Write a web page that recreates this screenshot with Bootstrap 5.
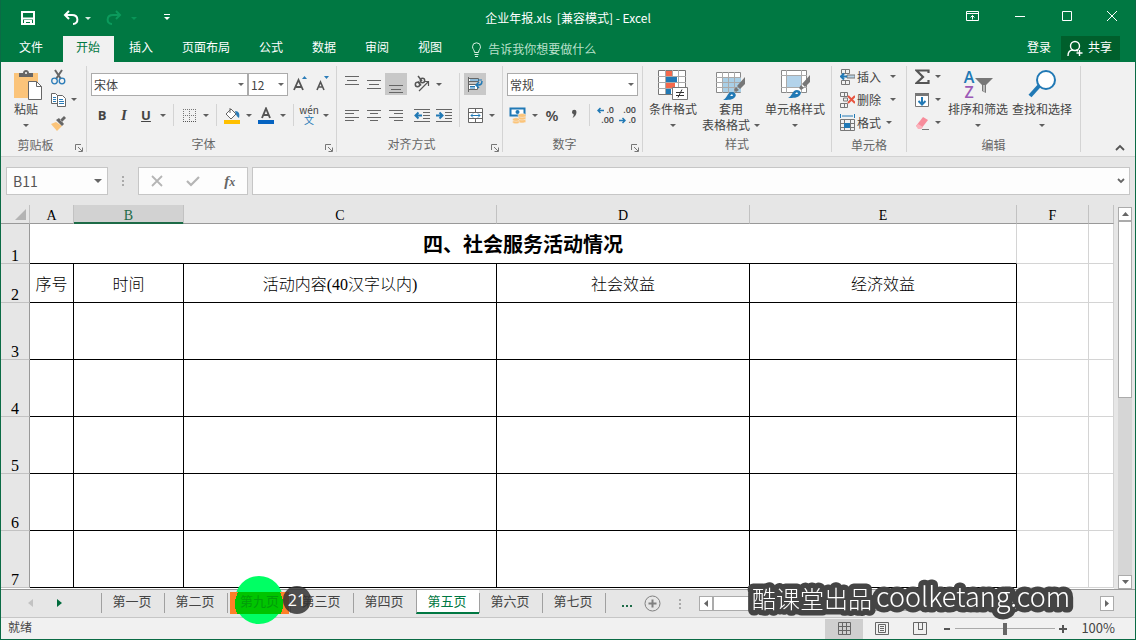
<!DOCTYPE html>
<html lang="zh-CN">
<head>
<meta charset="utf-8">
<meta name="viewport" content="width=device-width, initial-scale=1">
<title>企业年报.xls [兼容模式] - Excel</title>
<link href="https://cdn.jsdelivr.net/npm/bootstrap@5.3.0/dist/css/bootstrap.min.css" rel="stylesheet">
<style>
:root{--xl:#007842;--ribbon:#f1f1f1;--chrome:#e6e6e6;--ink:#444}
body{font-family:"Noto Sans CJK SC","Open Sans",sans-serif;font-size:12px;line-height:16px;color:var(--ink);background:var(--chrome)}
button{border:0;background:transparent;color:inherit;padding:0;font:inherit}
svg{display:block;flex:none}
.window{height:100vh;border:1px solid #0b6b45;border-top:0;overflow:hidden}
.bar-title{display:grid;grid-template-columns:1fr auto 1fr;height:36px;background:var(--xl);color:#fff}
.bar-title .quick{padding-left:19px}
.bar-title .sys{gap:25px;padding:0 12px 4px 0}
.drop{width:12px;display:flex;align-items:center;justify-content:center;flex:none}
.drop::after,.tri{content:"";border:4px solid transparent;border-bottom:0;border-top-color:currentColor;width:0;height:0;opacity:.85}
.quick .drop::after{border-width:3px;border-bottom:0}
.faded{color:#0b9a5c}
.bar-tabs{height:26px;background:var(--xl);color:#fff;padding-left:5px;gap:3px}
.bar-tabs a{color:#fff;text-decoration:none;padding:0 13px;height:26px;line-height:22px}
.bar-tabs a.current{background:var(--ribbon);color:var(--xl);margin-right:-1px;padding-right:14px}
.bar-tabs .tell{color:#b9e0cb;gap:6px;margin-left:13px}
.share{background:#005f2c;height:24px;padding:0 8px 0 6px;gap:5px;margin:0 15px 2px 7px}
.share span{line-height:14px;padding-bottom:2px}
.ribbon{background:var(--ribbon);padding:4px 0;border-bottom:1px solid #d2d2d2;height:95px}
.group{height:86px;border-right:1px solid #d4d4d4;position:relative;flex:none}
.group-name{height:18px;text-align:center;color:#666;margin-top:auto;line-height:20px}
.launch{position:absolute;right:3px;bottom:0}
.two-rows{padding:7px 0 0 4px;display:flex;flex-direction:column;gap:9px}
.g-clip{width:86px}.g-font{width:250px}.g-align{width:166px}.g-num{width:140px}.g-style{width:189px}.g-cell{width:75px}.g-edit{width:174px}
.styles-row{padding:0 6px}
.tool{width:22px;height:22px;display:flex;align-items:center;justify-content:center;flex:none}
.tool.down{background:#c8c8c8}
.vbar{width:1px;height:22px;margin:0 4px;background:#d4d4d4;flex:none}
.vbar.tall{height:54px;margin-top:7px}
.pick{height:23px;border:1px solid #ababab;background:#fff url("data:image/svg+xml,%3Csvg xmlns='http://www.w3.org/2000/svg' width='8' height='4'%3E%3Cpath d='M1 0h6L4 3z' fill='%23666'/%3E%3C/svg%3E") no-repeat right 2px center;appearance:none;border-radius:0;padding:0 2px;color:var(--ink);font-size:12px;line-height:20px;margin-bottom:-1px}
.w-face{width:157px}.w-size{width:40px}.w-num{width:131px}
.big{display:flex;flex-direction:column;align-items:center;padding-top:4px;flex:none;line-height:18px}
.big .second{height:14px;display:flex;align-items:center;gap:4px}
.big .tri,.row-tool .tri{border-width:3px;border-bottom:0}
.rows3{display:flex;flex-direction:column}
.row-tool{height:23px;display:flex;align-items:center;gap:2px;margin-top:-1px;margin-bottom:1px}
.row-tool .drop::after,.two-rows .drop::after{border-width:3px;border-bottom:0}
.letter{font-family:"Open Sans",sans-serif;font-size:13px;font-weight:700}
.percent{font-size:15px;font-weight:600}
.slanted{font-family:"Liberation Serif",serif;font-style:italic;font-size:15px}
.pinyin{flex-direction:column;width:22px;font-size:10px;line-height:10px}
.pinyin span+span{color:#2b7cb8}
.decimals{flex-direction:column;font:600 9px/10px "Open Sans",sans-serif;align-items:stretch;color:#444}
.decimals span{display:flex;justify-content:flex-end;align-items:center;gap:2px;padding-right:2px}
.az{width:30px;height:30px;display:flex;align-items:center;font:600 16px/15px "Open Sans",sans-serif;color:#2179b5}
.az .zed{color:#9b59b6}
.az-letters{display:flex;flex-direction:column;width:12px}
.bar-formula{height:48px;padding:10px 5px 10px 5px}
.box{background:#fdfdfd;border:1px solid #c6c6c6;height:28px}
.name-box{width:102px;font:14px/24px "Noto Sans CJK SC",sans-serif;padding:0 6px 1px;border-radius:0;background:#fdfdfd url("data:image/svg+xml,%3Csvg xmlns='http://www.w3.org/2000/svg' width='8' height='4'%3E%3Cpath d='M0 0h8L4 4z' fill='%23666'/%3E%3C/svg%3E") no-repeat right 5px center;color:#555}
.fx-tools{width:110px}
.fx{font:italic 700 15px/16px "Liberation Serif",serif;color:#666}
.fx small{font-size:12px}
.formula{min-width:0;border:0;background:transparent}
.grip{width:30px;display:flex;flex-direction:column;align-items:center;gap:2px}
.grip i{width:2px;height:2px;background:#aaa}
.sheet-area{min-height:0;flex:1 1 0;overflow:hidden}
.sheet{table-layout:fixed;border-collapse:separate;border-spacing:0;width:100%;color:#000;font-family:"Liberation Serif","Noto Sans CJK SC",serif;font-size:16px;line-height:18px;background:#fff}
.sheet th,.sheet td{padding:3px 0 0;text-align:center;vertical-align:middle;border-right:1px solid #d4d4d4;border-bottom:1px solid #d4d4d4;font-weight:300}
.sheet thead th{height:19px;padding:4px 0 0;line-height:14px;background:var(--chrome);border-color:#c2c2c2;border-bottom-color:#999;vertical-align:bottom;font-size:14px;font-weight:400}
.sheet thead th.sel{background:#d2d2d2;color:#1d6b47;border-bottom-color:#1d6b47;box-shadow:inset 0 -1px #1d6b47}
.sheet tbody th{background:var(--chrome);border-right-color:#999;border-bottom-color:#c2c2c2;vertical-align:bottom;line-height:14px}
.sheet tbody td.k{border-color:#000}
.sheet .heading{font-size:20px;font-weight:700;border-bottom-color:#000}
.sheet .r1{height:40px}.sheet .r2{height:39px}.sheet .rn{height:57px}
.c-head{width:29px}.c-a{width:44px}.c-b{width:110px}.c-c{width:313px}.c-d{width:253px}.c-e{width:267px}.c-f{width:72px}
.corner-tri{border-left:11px solid transparent;border-bottom:11px solid #b4b4b4;width:0;margin:0 3px 3px auto}
.vscroll{width:21px;padding:2px 3px 0 4px}
.vscroll .track{background:#d6d6d6}
.vscroll .thumb{height:50%;background:#fff;border:1px solid #ababab}
.sq{width:14px;height:14px;background:#fff;border:1px solid #ababab;display:flex;align-items:center;justify-content:center;flex:none}
.bar-sheets{height:29px;border-top:1px solid #999;border-bottom:1px solid #c6c6c6;position:relative;z-index:2;background:var(--chrome)}
.arrows{width:100px;padding:0 39px 2px 27px}
.sheet-tab{width:63px;height:20px;margin-top:3px;padding-right:2px;border-left:1px solid #a0a0a0;text-align:center;font-size:13px;line-height:16px;color:var(--ink);text-decoration:none;flex:none;position:relative}
.sheet-tab.current{background:#fff;color:var(--xl);height:24px;margin-top:0;padding-top:3px;border-bottom:2px solid var(--xl)}
.sheet-tab.last{border-right:1px solid #a0a0a0;width:64px}
.sheet-tab.nine{z-index:1;padding-right:0}
.sheet-tab.nine::before{content:"";position:absolute;width:48px;height:48px;border-radius:50%;background:#00ff64;left:7px;top:-17px;z-index:-1}
.nine span{display:block;margin:-1px 1px 0 2px;height:22px;line-height:18px;color:#009c0a;background:radial-gradient(circle at 29px 12px,#00c400 24px,#ff7f27 24px)}
.clicks{position:absolute;left:55px;top:-7px;width:28px;height:28px;border-radius:50%;background:rgba(50,50,50,.85);color:#fff;font:16px/28px "Open Sans",sans-serif}
.hscroll{margin:0 21px 0 0}
.hscroll .thumb{height:15px;background:#fff;border:1px solid #ababab;width:70%}
.hscroll .sq{height:15px}
.bar-status{height:21px;background:var(--ribbon);padding-left:7px}
.view{width:38px;height:20px;display:flex;align-items:center;justify-content:center}
.view.down{background:#cfcfcf}
.zoom{appearance:none;width:100px;height:12px;margin:0 4px;background:linear-gradient(#aaa,#aaa) no-repeat center/100% 1px}
.zoom::-webkit-slider-thumb{appearance:none;width:4px;height:12px;background:#666}
.percent-now{font-size:13px;padding-bottom:2px;margin:0 20px 0 14px}
.credit{position:fixed;right:52px;bottom:18px;z-index:5}
.credit text{font-family:"Noto Sans CJK SC",sans-serif;font-weight:300;fill:#fff;stroke:#444;stroke-width:11px;stroke-linejoin:round;paint-order:stroke;font-size:24px}
.credit .site{font-size:27px}
</style>
</head>
<body>
<div class="window d-flex flex-column">

<header class="bar-title">
  <div class="quick d-flex align-items-center">
    <button aria-label="保存"><svg width="16" height="16" fill="none" stroke="#fff" stroke-width="2"><path d="M2 2h12v12H2zM2 8.500h12M5 14v-3h6v3"/></svg></button>
    <button class="ms-4" aria-label="撤销"><svg width="22" height="18" fill="none" stroke="#fff" stroke-width="2"><path d="M9 2L5 6l4 4M5 6h7c7 0 7 9 1 9"/></svg></button>
    <span class="drop"></span>
    <button class="ms-2" aria-label="恢复"><svg width="22" height="18" fill="none" stroke="#0b9a5c" stroke-width="2"><path d="M14 2l4 4-4 4M18 6h-7c-7 0-7 9-1 9"/></svg></button>
    <span class="drop ms-1 faded"></span>
    <button class="ms-4" aria-label="自定义"><svg width="8" height="14"><path d="M0 3.500h6" stroke="#fff"/><path d="M0 6h6L3 9z" fill="#fff"/></svg></button>
  </div>
  <div class="d-flex align-items-center" style="white-space:pre">企业年报.xls  [兼容模式] - Excel</div>
  <div class="sys d-flex align-items-center justify-content-end">
    <button aria-label="功能区显示选项"><svg width="24" height="16" fill="none" stroke="#fff"><path d="M6.500 3.500h12v9h-12zM6 5.500h13M12.500 11.500v-4M10.500 9.500l2-2 2 2"/></svg></button>
    <button aria-label="最小化"><svg width="22" height="16" stroke="#fff"><path d="M6 8.500h10"/></svg></button>
    <button aria-label="最大化"><svg width="22" height="16" fill="none" stroke="#fff"><path d="M6.500 3.500h9v9h-9z"/></svg></button>
    <button aria-label="关闭"><svg width="20" height="16" stroke="#fff"><path d="M4 3l10 10M14 3L4 13"/></svg></button>
  </div>
</header>

<nav class="bar-tabs d-flex align-items-center">
  <a href="#" class="me-1">文件</a><a href="#" class="current">开始</a><a href="#">插入</a><a href="#">页面布局</a><a href="#">公式</a><a href="#">数据</a><a href="#">审阅</a><a href="#">视图</a>
  <button class="tell d-flex align-items-center"><svg width="11" height="15" fill="none" stroke="#d8f0e2"><path d="M3.500 10.500C3.500 8 1.500 7 1.500 4.800a4 4 0 018 0c0 2.200-2 3.200-2 5.700zM3.500 12.500h4M4 14.500h3"/></svg>告诉我你想要做什么</button>
  <a href="#" class="ms-auto p-0">登录</a>
  <button class="share d-flex align-items-center"><svg width="16" height="17" fill="none" stroke="#fff" stroke-width="1.400"><circle cx="8" cy="6" r="4.500"/><path d="M1 16c0-4 2-6 5-6M9 10l2 1M12.500 10v6M9.500 13h6"/></svg><span>共享</span></button>
</nav>

<section class="ribbon d-flex">
  <div class="group g-clip d-flex flex-column">
    <div class="d-flex">
      <button class="big ps-2 pe-2"><svg width="34" height="30"><path d="M5 3h24v25H5z" fill="#fbc47a"/><path d="M10 7V3h4c0-4 6-4 6 0h4v4z" fill="#666"/><circle cx="17" cy="3" r="1" fill="#fff"/><path d="M19.500 11.500h8l5 5v13h-13z" fill="#fff" stroke="#666"/><path d="M27.500 11.500v5h5" fill="none" stroke="#666"/></svg>粘贴<span class="second"><i class="tri"></i></span></button>
      <div class="rows3">
        <button class="row-tool" aria-label="剪切"><svg width="16" height="18" fill="none"><path d="M4 2l6 9M11 2L5 11" stroke="#666" stroke-width="2"/><circle cx="3.500" cy="13" r="2.800" stroke="#2b7cb8" stroke-width="1.300"/><circle cx="11" cy="13" r="2.800" stroke="#2b7cb8" stroke-width="1.300"/></svg></button>
        <button class="row-tool" aria-label="复制"><svg width="15" height="16" fill="#fff" stroke="#666"><path d="M.5 1.500h4l3 3v7h-7z"/><path d="M2 5.500h3M2 7.500h3M2 9.500h3" stroke="#2b7cb8"/><path d="M6.500 3.500h5l3 3v8h-8z"/><path d="M8 7.500h4M8 9.500h5M8 11.500h5" stroke="#2b7cb8"/></svg><span class="drop"></span></button>
        <button class="row-tool" aria-label="格式刷"><svg width="18" height="16"><path d="M0 9l5-2 6 4-5 5z" fill="#fbc47a"/><path d="M5 5l6 6 2-2-5-6zM9 5l4-4 2 2-4 4z" fill="#666"/></svg></button>
      </div>
    </div>
    <div class="group-name pe-3">剪贴板</div>
    <button class="launch" aria-label="剪贴板选项"><svg width="9" height="9" fill="none" stroke="#777"><path d="M1.500 7V1.500H7M4 4l4 4M8.500 4.500v4h-4"/></svg></button>
  </div>

  <div class="group g-font d-flex flex-column">
    <div class="two-rows">
      <div class="d-flex align-items-center">
        <select class="pick w-face" aria-label="字体"><option>宋体</option></select><select class="pick w-size" aria-label="字号"><option>12</option></select>
        <button class="tool" aria-label="增大字号"><svg width="16" height="18" fill="none" stroke="#555" stroke-width="1.800"><path d="M3 15L7.500 5 12 15M5 12h5.500"/><path d="M11 4l2.500-3L16 4z" fill="#2b7cb8" stroke="none"/></svg></button>
        <button class="tool" aria-label="减小字号"><svg width="16" height="18" fill="none" stroke="#555" stroke-width="1.600"><path d="M4 15l3.500-8L11 15M5 12h4.500"/><path d="M11 1l2.500 3L16 1z" fill="#2b7cb8" stroke="none"/></svg></button>
      </div>
      <div class="d-flex align-items-center">
        <button class="tool letter">B</button><button class="tool letter slanted">I</button><button class="tool letter text-decoration-underline">U</button><span class="drop"></span>
        <span class="vbar"></span>
        <button class="tool" aria-label="边框"><svg width="15" height="15" fill="none" stroke="#777" stroke-dasharray="1 1"><path d="M1 1.500h13M1 7.500h13M1.500 1v12M7.500 1v12M13.500 1v12"/><path d="M1 13.500h13" stroke="#555"/></svg></button><span class="drop"></span>
        <span class="vbar"></span>
        <button class="tool" aria-label="填充颜色"><svg width="18" height="17"><path d="M3 7l5-5 5 5-5 5z" fill="#fff" stroke="#666"/><path d="M7 6V1" stroke="#666"/><path d="M12 4c4 0 5 3 4 7-2-1-3-3-4-7z" fill="#2b7cb8"/><path d="M1 13h16v4H1z" fill="#ffc000"/></svg></button><span class="drop"></span>
        <button class="tool" aria-label="字体颜色"><svg width="16" height="17"><path d="M4 11L8 1.500 12 11M5.500 8h5" fill="none" stroke="#555" stroke-width="1.900"/><path d="M0 13h16v4H0z" fill="#0563c1"/></svg></button><span class="drop"></span>
        <span class="vbar"></span>
        <button class="tool pinyin"><span>wén</span><span>文</span></button><span class="drop"></span>
      </div>
    </div>
    <div class="group-name pe-3">字体</div>
    <button class="launch" aria-label="字体选项"><svg width="9" height="9" fill="none" stroke="#777"><path d="M1.500 7V1.500H7M4 4l4 4M8.500 4.500v4h-4"/></svg></button>
  </div>

  <div class="group g-align d-flex flex-column">
    <div class="d-flex">
      <div class="two-rows">
        <div class="d-flex">
          <button class="tool" aria-label="顶端对齐"><svg width="14" height="18" stroke="#666"><path d="M0 1.500h14M2 5.500h10M0 9.500h14"/></svg></button>
          <button class="tool" aria-label="垂直居中"><svg width="14" height="18" stroke="#666"><path d="M0 5.500h14M2 9.500h10M0 13.500h14"/></svg></button>
          <button class="tool down" aria-label="底端对齐"><svg width="14" height="18" stroke="#666"><path d="M0 10.500h14M2 14.500h10M0 17.500h14"/></svg></button>
          <button class="tool ms-1" aria-label="方向"><svg width="18" height="18" fill="none" stroke="#555" stroke-width="1.500"><circle cx="4.500" cy="9.500" r="2.200"/><path d="M5 6.500l3 4"/><circle cx="9.500" cy="5.500" r="2.200"/><path d="M5 1l4 5"/><path d="M6 16l9-9M11.500 6.500h4V11" stroke-width="1.200"/></svg></button><span class="drop"></span>
        </div>
        <div class="d-flex">
          <button class="tool" aria-label="左对齐"><svg width="14" height="13" stroke="#666"><path d="M0 1.500h14M0 4.500h9M0 8.500h14M0 11.500h9"/></svg></button>
          <button class="tool" aria-label="居中"><svg width="14" height="13" stroke="#666"><path d="M0 1.500h14M3 4.500h8M0 8.500h14M3 11.500h8"/></svg></button>
          <button class="tool" aria-label="右对齐"><svg width="14" height="13" stroke="#666"><path d="M0 1.500h14M5 4.500h9M0 8.500h14M5 11.500h9"/></svg></button>
          <button class="tool ms-1" aria-label="减少缩进"><svg width="16" height="13" stroke="#666"><path d="M0 .5h16M9 3.500h7M9 6.500h7M9 9.500h7M0 12.500h16"/><path d="M8 6.500H2M4.500 3.500l-3 3 3 3" fill="none" stroke="#2179b5" stroke-width="2"/></svg></button>
          <button class="tool" aria-label="增加缩进"><svg width="16" height="13" stroke="#666"><path d="M0 .5h16M9 3.500h7M9 6.500h7M9 9.500h7M0 12.500h16"/><path d="M0 6.500h6M3.500 3.500l3 3-3 3" fill="none" stroke="#2179b5" stroke-width="2"/></svg></button>
        </div>
      </div>
      <span class="vbar tall"></span>
      <div class="two-rows ps-0">
        <button class="tool down" aria-label="自动换行"><svg width="18" height="18" fill="none"><path d="M2.500 2v15M2.500 3.500h10v3h-10zM2.500 9.500h9v5h-9z" fill="#fff" stroke="#666"/><path d="M4 5h12M4 11.500h5M4 13h5" stroke="#2179b5"/><path d="M16 6c0 4-2 4-5 4M13 7l-3 3 3 3" stroke="#2179b5" stroke-width="1.500"/></svg></button>
        <div class="d-flex"><button class="tool" aria-label="合并后居中"><svg width="15" height="15" fill="#fff" stroke="#666"><path d="M.5.500h14v14H.5zM.5 4.500h14M.5 10.500h14M7.500 0v4M7.500 11v4"/><path d="M3 7.500h9M5 5.500l-2 2 2 2M10 5.500l2 2-2 2" fill="none" stroke="#2179b5"/></svg></button><span class="drop"></span></div>
      </div>
    </div>
    <div class="group-name pe-3">对齐方式</div>
    <button class="launch" aria-label="对齐选项"><svg width="9" height="9" fill="none" stroke="#777"><path d="M1.500 7V1.500H7M4 4l4 4M8.500 4.500v4h-4"/></svg></button>
  </div>

  <div class="group g-num d-flex flex-column">
    <div class="two-rows">
      <select class="pick w-num" aria-label="数字格式"><option>常规</option></select>
      <div class="d-flex align-items-center">
        <button class="tool" aria-label="会计格式"><svg width="18" height="17"><path d="M1.500 1.500h14v7h-14z" fill="#fff" stroke="#2179b5" stroke-width="2"/><circle cx="8.500" cy="5" r="2" fill="#2179b5"/><g fill="#fbc47a" stroke="#f1f1f1" stroke-width=".5"><ellipse cx="13" cy="14" rx="4" ry="2"/><ellipse cx="13" cy="11" rx="4" ry="2"/><ellipse cx="13" cy="8.500" rx="4" ry="2"/><ellipse cx="7" cy="15" rx="3.500" ry="1.800"/><ellipse cx="7" cy="12.500" rx="3.500" ry="1.800"/></g></svg></button><span class="drop"></span>
        <button class="tool letter percent">%</button>
        <button class="tool" aria-label="千位分隔"><svg width="8" height="12"><path d="M2 3a2.200 2.200 0 014.500 0c0 3-2 5-4 6 1-2 1.500-3 1-4C2.500 5 2 4 2 3z" fill="#555"/></svg></button>
        <span class="vbar"></span>
        <button class="tool decimals" aria-label="增加小数位数"><span><svg width="7" height="7" fill="none" stroke="#2179b5" stroke-width="1.500"><path d="M7 3.500H1M3.500 1L1 3.500 3.500 6"/></svg>.0</span><span>.00</span></button>
        <button class="tool decimals" aria-label="减少小数位数"><span>.00</span><span><svg width="7" height="7" fill="none" stroke="#2179b5" stroke-width="1.500"><path d="M0 3.500h6M3.500 1L6 3.500 3.500 6"/></svg>.0</span></button>
      </div>
    </div>
    <div class="group-name pe-3">数字</div>
    <button class="launch" aria-label="数字选项"><svg width="9" height="9" fill="none" stroke="#777"><path d="M1.500 7V1.500H7M4 4l4 4M8.500 4.500v4h-4"/></svg></button>
  </div>

  <div class="group g-style d-flex flex-column">
    <div class="styles-row d-flex justify-content-between">
      <button class="big"><svg width="30" height="30"><path d="M.5.500h27v24H.5z" fill="#fff" stroke="#777"/><path d="M0 6.500h28M0 12.500h28M0 18.500h28M7.500 0v24M14.500 0v24M20.500 0v24" stroke="#aaa"/><path d="M8 1h6v5H8zM8 13h9v5H8z" fill="#f4694c"/><path d="M8 7h11v5H8zM8 19h5v5H8z" fill="#2179b5"/><path d="M14.500 17.500h15v12h-15z" fill="#fff" stroke="#777"/><path d="M18 22.500h8M18 25.500h8M24 19.500l-4 8" stroke="#333"/></svg>条件格式<span class="second"><i class="tri"></i></span></button>
      <button class="big"><svg width="30" height="30"><path d="M.5 2.500h24v20H.5z" fill="#fff" stroke="#888"/><path d="M7 8h18v14H7z" fill="#a9cfe6"/><path d="M0 7.500h25M0 12.500h25M0 17.500h25M6.500 2v21M12.500 2v21M18.500 2v21" stroke="#aaa"/><path d="M29 7v7l-5 5-3-3zM23 20l-3 2-2-2 2-3z" fill="#777"/><path d="M7 30c4-1 4-8 9-8 3 0 5 3 3 5-2 3-7 3-12 3z" fill="#2179b5"/><path d="M14 26l2-2 1 2z" fill="#fff"/></svg>套用<span class="second">表格格式<i class="tri"></i></span></button>
      <button class="big"><svg width="30" height="30"><path d="M1.500.500h25v22h-25z" fill="#fff" stroke="#888"/><path d="M1 5.500h26M1 17.500h26M6.500 0v23M21.500 0v23" stroke="#aaa"/><path d="M7 6h14v11H7z" fill="#b3d3ea"/><path d="M30 5v7l-5 5-3-3zM24 18l-3 2-2-2 2-3z" fill="#777"/><path d="M8 28c4-1 4-8 9-8 3 0 5 3 3 5-2 3-7 3-12 3z" fill="#2179b5"/><path d="M15 24l2-2 1 2z" fill="#fff"/></svg>单元格样式<span class="second"><i class="tri"></i></span></button>
    </div>
    <div class="group-name">样式</div>
  </div>

  <div class="group g-cell d-flex flex-column">
    <div class="rows3 ps-1 ms-1 me-0">
      <button class="row-tool"><svg width="15" height="18" fill="none" stroke="#777"><path d="M1.500 1.500h8v4h-8zM5.500 1v4M1.500 12.500h8v4h-8zM5.500 12v5"/><path d="M7 7h8v3H7z" fill="#b9d4e8"/><path d="M7 8.500H1M4 5.500l-3 3 3 3" stroke="#2179b5" stroke-width="2"/></svg>插入<span class="drop ms-1"></span></button>
      <button class="row-tool"><svg width="15" height="18" fill="none" stroke="#777"><path d="M.5 1.500h7v4h-7zM4.500 1v4M.5 12.500h7v4h-7zM4.500 12v5M3.500 7h4v3h-4z"/><path d="M8 5l7 7M15 5l-7 7" stroke="#e8543f" stroke-width="2"/></svg>删除<span class="drop ms-1"></span></button>
      <button class="row-tool"><svg width="15" height="18" fill="none" stroke="#777"><path d="M.5 5.500h14v11H.5zM0 9.500h15M0 13.500h15M4.500 5v12M10.500 5v12"/><path d="M4 9h6v5H4z" fill="#2179b5" stroke="none"/><path d="M.5 0v4M14.500 0v4M2 2h11" stroke="#2179b5"/></svg>格式<span class="drop"></span></button>
    </div>
    <div class="group-name">单元格</div>
  </div>

  <div class="group g-edit d-flex flex-column">
    <div class="d-flex ps-1">
      <div class="rows3 ps-1">
        <button class="row-tool" aria-label="自动求和"><svg width="15" height="16"><path d="M13.500 4V1.500H1.500L8 8l-6.500 6h12v-3" fill="none" stroke="#555" stroke-width="2.200"/></svg><span class="drop"></span></button>
        <button class="row-tool" aria-label="填充"><svg width="15" height="16"><path d="M.5 1.500h13v13H.5z" fill="#fff" stroke="#777"/><path d="M0 1h14v3H0z" fill="#777"/><path d="M7 5v7M3.500 9L7 12.500 10.500 9" fill="none" stroke="#2179b5" stroke-width="2"/></svg><span class="drop"></span></button>
        <button class="row-tool" aria-label="清除"><svg width="15" height="16"><path d="M1 11l7-9 5 3-7 9z" fill="#f78c9b"/><path d="M1 11l2-2 5 3-2 2H3z" fill="#fbb3bd"/><path d="M7 14.500h7" stroke="#777"/></svg><span class="drop"></span></button>
      </div>
      <button class="big ms-1"><span class="az"><span class="az-letters"><span>A</span><span class="zed">Z</span></span><svg width="18" height="18"><path d="M0 2h18l-7 7v8l-4-2V9z" fill="#777"/><path d="M8.500 9v6l1 1V9z" fill="#fff"/></svg></span>排序和筛选<span class="second"><i class="tri"></i></span></button>
      <button class="big ms-1"><svg width="30" height="30" fill="none" stroke="#2179b5"><circle cx="19" cy="10" r="9" fill="#fff" stroke-width="2"/><path d="M12 16L3 26" stroke-width="4"/></svg>查找和选择<span class="second"><i class="tri"></i></span></button>
    </div>
    <div class="group-name">编辑</div>
  </div>
  <button class="ms-auto me-2 align-self-end" aria-label="折叠功能区"><svg width="14" height="10" fill="none" stroke="#555" stroke-width="1.800"><path d="M3 8l4-4 4 4"/></svg></button>
</section>

<section class="bar-formula d-flex">
  <input class="box name-box" value="B11" aria-label="名称框">
  <span class="grip justify-content-center"><i></i><i></i><i></i></span>
  <div class="box fx-tools d-flex align-items-center justify-content-around">
    <button aria-label="取消"><svg width="12" height="12" stroke="#b5b5b5" stroke-width="1.800"><path d="M1 1l10 10M11 1L1 11"/></svg></button>
    <button aria-label="输入"><svg width="14" height="12" fill="none" stroke="#b5b5b5" stroke-width="2.200"><path d="M1 6l4 4 8-8"/></svg></button>
    <button class="fx">f<small>x</small></button>
  </div>
  <div class="box flex-grow-1 ms-1 d-flex align-items-center"><input class="formula flex-grow-1" aria-label="编辑栏"><button class="me-1" aria-label="展开编辑栏"><svg width="8" height="7" fill="none" stroke="#666" stroke-width="1.800"><path d="M1 1l3 3 3-3"/></svg></button></div>
</section>

<main class="sheet-area d-flex">
  <div class="flex-grow-1 bg-white">
  <table class="sheet">
    <colgroup><col class="c-head"><col class="c-a"><col class="c-b"><col class="c-c"><col class="c-d"><col class="c-e"><col class="c-f"><col></colgroup>
    <thead><tr><th><div class="corner-tri"></div></th><th>A</th><th class="sel">B</th><th>C</th><th>D</th><th>E</th><th>F</th><th></th></tr></thead>
    <tbody>
      <tr class="r1"><th>1</th><td colspan="5" class="heading">四、社会服务活动情况</td><td></td><td></td></tr>
      <tr class="r2"><th>2</th><td class="k">序号</td><td class="k">时间</td><td class="k">活动内容(40汉字以内)</td><td class="k">社会效益</td><td class="k">经济效益</td><td></td><td></td></tr>
      <tr class="rn"><th>3</th><td class="k"></td><td class="k"></td><td class="k"></td><td class="k"></td><td class="k"></td><td></td><td></td></tr>
      <tr class="rn"><th>4</th><td class="k"></td><td class="k"></td><td class="k"></td><td class="k"></td><td class="k"></td><td></td><td></td></tr>
      <tr class="rn"><th>5</th><td class="k"></td><td class="k"></td><td class="k"></td><td class="k"></td><td class="k"></td><td></td><td></td></tr>
      <tr class="rn"><th>6</th><td class="k"></td><td class="k"></td><td class="k"></td><td class="k"></td><td class="k"></td><td></td><td></td></tr>
      <tr class="rn"><th>7</th><td class="k"></td><td class="k"></td><td class="k"></td><td class="k"></td><td class="k"></td><td></td><td></td></tr>
    </tbody>
  </table>
  </div>
  <div class="vscroll d-flex flex-column flex-shrink-0">
    <button class="sq" aria-label="向上滚动"><svg width="7" height="4"><path d="M0 4h7L3.500 0z" fill="#666"/></svg></button>
    <div class="track flex-grow-1"><div class="thumb"></div></div>
    <button class="sq" aria-label="向下滚动"><svg width="7" height="4"><path d="M0 0h7L3.500 4z" fill="#666"/></svg></button>
  </div>
</main>

<nav class="bar-sheets d-flex">
  <div class="arrows d-flex justify-content-between align-items-center flex-shrink-0">
    <button aria-label="上一个"><svg width="5" height="8"><path d="M5 0v8L0 4z" fill="#c2c2c2"/></svg></button>
    <button aria-label="下一个"><svg width="5" height="8"><path d="M0 0v8l5-4z" fill="#006b3c"/></svg></button>
  </div>
  <a href="#" class="sheet-tab">第一页</a><a href="#" class="sheet-tab">第二页</a><a href="#" class="sheet-tab nine"><span>第九页</span><b class="clicks">21</b></a><a href="#" class="sheet-tab">第三页</a><a href="#" class="sheet-tab">第四页</a><a href="#" class="sheet-tab current">第五页</a><a href="#" class="sheet-tab">第六页</a><a href="#" class="sheet-tab last">第七页</a>
  <button class="ms-3" aria-label="更多工作表"><svg width="10" height="7" fill="#1d6b47"><path d="M0 5h2v2H0zM4 5h2v2H4zM8 5h2v2H8z"/></svg></button>
  <button class="ms-2 ps-1" aria-label="新工作表"><svg width="17" height="17" fill="none" stroke="#808080"><circle cx="8.500" cy="8.500" r="7.500"/><path d="M4.500 8.500h8M8.500 4.500v8" stroke-width="2"/></svg></button>
  <span class="grip justify-content-center ms-1 me-1"><i></i><i></i><i></i></span>
  <div class="hscroll d-flex align-items-center flex-grow-1">
    <button class="sq" aria-label="向左滚动"><svg width="4" height="7"><path d="M4 0v7L0 3.500z" fill="#666"/></svg></button>
    <div class="flex-grow-1"><div class="thumb"></div></div>
    <button class="sq" aria-label="向右滚动"><svg width="4" height="7"><path d="M0 0v7l4-3.500z" fill="#666"/></svg></button>
  </div>
</nav>

<footer class="bar-status d-flex align-items-center">
  <span class="me-auto pb-1">就绪</span>
  <button class="view down" aria-label="普通"><svg width="13" height="13" fill="none" stroke="#666"><path d="M.5.500h12v12H.5zM0 4.500h13M0 8.500h13M4.500 0v13M8.500 0v13"/></svg></button>
  <button class="view" aria-label="页面布局"><svg width="14" height="13" fill="none" stroke="#666"><path d="M.5.500h13v12H.5zM3.500 2.500h7v8h-7zM5 4.500h4M5 6.500h4M5 8.500h4"/></svg></button>
  <button class="view" aria-label="分页预览"><svg width="14" height="13" fill="none" stroke="#666"><path d="M.5.500h13v12H.5zM5.500 0v7M9.500 0v7M5 7.500h5"/></svg></button>
  <button class="ms-1" aria-label="缩小"><svg width="8" height="8" stroke="#555" stroke-width="2"><path d="M1 4h6"/></svg></button>
  <input type="range" class="zoom" min="10" max="190" value="100" aria-label="缩放">
  <button aria-label="放大"><svg width="8" height="8" stroke="#555" stroke-width="2"><path d="M0 4h8M4 0v8"/></svg></button>
  <span class="percent-now">100%</span>
</footer>
</div>

<svg class="credit" width="340" height="48" aria-label="酷课堂出品 coolketang.com"><text x="8" y="34">酷课堂出品</text><text class="site" x="132" y="33">coolketang.com</text></svg>
<script src="https://cdn.jsdelivr.net/npm/bootstrap@5.3.0/dist/js/bootstrap.bundle.min.js"></script>
</body>
</html>
